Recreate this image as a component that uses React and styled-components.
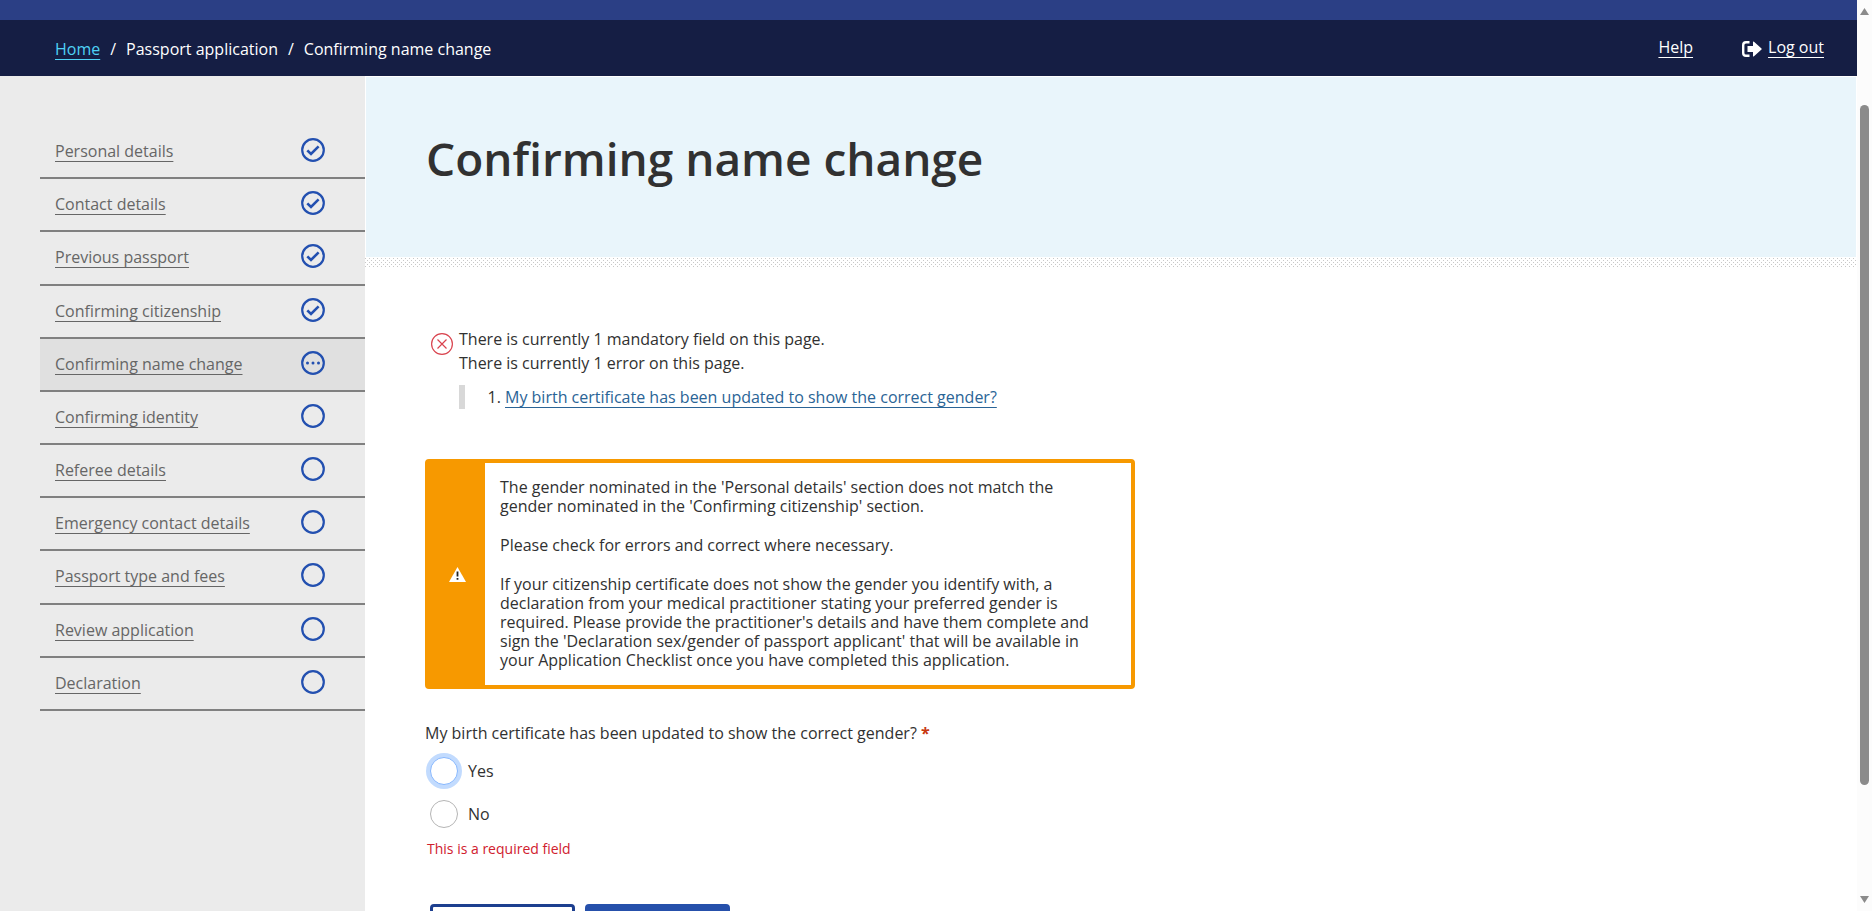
import React from "react";
import styled, { createGlobalStyle, css } from "styled-components";

const GlobalStyle = createGlobalStyle`
  * { box-sizing: border-box; }
  body {
    margin: 0;
    background: #fff;
    color: #313131;
    font-family: "Open Sans", sans-serif;
    font-size: 16px;
    line-height: 24px;
  }
`;

const Window = styled.div`
  display: grid;
  grid-template-columns: minmax(0, 1fr) 15px;
  height: 100vh;
  overflow: hidden;
`;

const Page = styled.div`
  display: flex;
  flex-direction: column;
  min-height: 0;
`;

const Banner = styled.header`
  flex: none;
  border-top: 20px solid #2b3f85;
  background: #151e44;
  color: #fff;
  height: 76px;
  padding: 0 33px 0 55px;
  display: flex;
  justify-content: space-between;
  font-weight: 500;
`;

const Breadcrumbs = styled.nav`
  display: flex;
  gap: 10px;
  padding-top: 17px;
`;

const TopLinks = styled.nav`
  display: flex;
  gap: 49px;
  padding-top: 15px;
`;

const underline = css`
  text-decoration: underline;
  text-underline-offset: 4px;
  text-decoration-thickness: 1px;
`;

const Link = styled.a`
  ${underline}
  color: ${(p) => p.$color || "#fff"};
`;

const LogOut = styled.span`
  display: flex;
  gap: 6px;
  svg { margin-top: 6px; }
`;

const Columns = styled.div`
  flex: 1;
  min-height: 0;
  display: grid;
  grid-template-columns: 365px minmax(0, 1fr);
`;

const Sidebar = styled.nav`
  background: #ebebeb;
  padding: 50px 0 0 40px;
`;

const Steps = styled.ol`
  list-style: none;
  margin: 0;
  padding: 0;
  height: 585px;
  display: grid;
  grid-auto-rows: 1fr;
`;

const Step = styled.li`
  display: flex;
  justify-content: space-between;
  align-items: flex-start;
  padding: 12px 40px 0 15px;
  border-bottom: 2px solid #808080;
  background: ${(p) => (p.$current ? "#e0e0e0" : "transparent")};
  a {
    ${underline}
    color: #666;
    line-height: 26px;
  }
`;

const Main = styled.main`
  min-width: 0;
  overflow: hidden;
`;

const Hero = styled.div`
  margin: 1px 1px 0;
  background: #e9f5fb;
  height: 180px;
  padding: 45px 60px 0;
`;

const Title = styled.h1`
  margin: 0;
  font-size: 46px;
  line-height: 72px;
  font-weight: 600;
`;

const DotBand = styled.svg`
  display: block;
  width: 100%;
  height: 10px;
`;

const Content = styled.form`
  padding: 60px 60px 0;
`;

const ErrorSummary = styled.section`
  display: flex;
  gap: 5px;
  padding-left: 5px;
  svg { flex: none; margin-top: 5px; }
  p { margin: 0; }
`;

const ErrorList = styled.ol`
  margin: 10px 0 0;
  padding-left: 40px;
  border-left: 6px solid #d8d8d8;
`;

const Warning = styled.section`
  margin-top: 50px;
  width: 710px;
  max-width: 100%;
  border: 4px solid #f79900;
  border-radius: 4px;
  background: #f79900;
  display: grid;
  grid-template-columns: 56px minmax(0, 1fr);
`;

const WarningIcon = styled.div`
  display: grid;
  place-items: center;
`;

const WarningText = styled.div`
  background: #fff;
  padding: 15px 30px 15px 15px;
  line-height: 19px;
  p { margin: 0 0 20px; }
  p:last-child { margin: 0; }
`;

const Question = styled.fieldset`
  border: 0;
  margin: 32px 0 0;
  padding: 0;
  legend { padding: 0; }
`;

const Required = styled.span`
  color: #c8380f;
  font-weight: 700;
`;

const Options = styled.div`
  display: flex;
  flex-direction: column;
  align-items: flex-start;
  gap: 15px;
  padding: 12px 0 0 5px;
`;

const Option = styled.label`
  display: flex;
  align-items: center;
  gap: 10px;
`;

const Radio = styled.input`
  appearance: none;
  flex: none;
  margin: 0;
  width: 28px;
  height: 28px;
  border-radius: 50%;
  background: #fff;
  border: 1px solid ${(p) => (p.$active ? "#86b7fe" : "#b5b5b5")};
  box-shadow: ${(p) => (p.$active ? "0 0 0 4px #c2dbfe" : "none")};
`;

const FieldError = styled.p`
  margin: 11px 0 0 2px;
  color: #d0202e;
  font-size: 14px;
  line-height: 20px;
`;

const Actions = styled.div`
  display: flex;
  gap: 10px;
  margin: 45px 0 0 5px;
`;

const Button = styled.button`
  width: 145px;
  height: 45px;
  border: 3px solid ${(p) => (p.$primary ? "#2650ab" : "#1d3f8f")};
  border-radius: 4px;
  background: ${(p) => (p.$primary ? "#2650ab" : "#fff")};
`;

const ScrollTrack = styled.div`
  background: #fcfcfc;
  display: flex;
  flex-direction: column;
  align-items: center;
  padding: 8px 0 8px;
`;

const ScrollArrow = styled.svg`
  flex: none;
`;

const ScrollThumb = styled.div`
  width: 9px;
  flex: 680;
  background: #8b8b8b;
  border-radius: 5px;
`;

const ScrollGap = styled.div`
  flex: ${(p) => p.$size};
`;

function StatusIcon({ status }) {
  return (
    <svg width="24" height="24" viewBox="0 0 24 24" fill="none" stroke="#2350b0" strokeWidth="2.2">
      <circle cx="12" cy="12" r="10.8" />
      {status === "done" && <path d="M6.3 12.3 10 16 17.6 8.4" strokeWidth="2.6" />}
      {status === "current" && (
        <g fill="#2350b0" stroke="none">
          <circle cx="6.5" cy="12" r="1.5" />
          <circle cx="12" cy="12" r="1.5" />
          <circle cx="17.5" cy="12" r="1.5" />
        </g>
      )}
    </svg>
  );
}

const steps = [
  ["Personal details", "done"],
  ["Contact details", "done"],
  ["Previous passport", "done"],
  ["Confirming citizenship", "done"],
  ["Confirming name change", "current"],
  ["Confirming identity", "todo"],
  ["Referee details", "todo"],
  ["Emergency contact details", "todo"],
  ["Passport type and fees", "todo"],
  ["Review application", "todo"],
  ["Declaration", "todo"],
];

export default function App() {
  return (
    <Window>
      <GlobalStyle />
      <Page>
        <Banner>
          <Breadcrumbs aria-label="Breadcrumb">
            <Link href="#home" $color="#4fd2f5">Home</Link>
            <span>/</span>
            <span>Passport application</span>
            <span>/</span>
            <span>Confirming name change</span>
          </Breadcrumbs>
          <TopLinks>
            <Link href="#help">Help</Link>
            <LogOut>
              <svg width="20" height="16" viewBox="0 0 20 16">
                <path d="M7.5 1.2H4Q1.2 1.2 1.2 4V12Q1.2 14.8 4 14.8H7.5" fill="none" stroke="#fff" strokeWidth="2.4" />
                <path d="M5.5 5H11V1Q11 0 12 .8L19.5 7.4Q20 8 19.5 8.6L12 15.2Q11 16 11 15V11H5.5Z" fill="#fff" />
              </svg>
              <Link href="#logout">Log out</Link>
            </LogOut>
          </TopLinks>
        </Banner>
        <Columns>
          <Sidebar aria-label="Application steps">
            <Steps>
              {steps.map(([name, status]) => (
                <Step key={name} $current={status === "current"}>
                  <a href="#step">{name}</a>
                  <StatusIcon status={status} />
                </Step>
              ))}
            </Steps>
          </Sidebar>
          <Main>
            <Hero>
              <Title>Confirming name change</Title>
            </Hero>
            <DotBand aria-hidden="true">
              <pattern id="dots" width="4" height="4" patternUnits="userSpaceOnUse">
                <rect x="0" y="1" width="1" height="1" fill="#c8c8c8" />
                <rect x="2" y="3" width="1" height="1" fill="#c8c8c8" />
              </pattern>
              <rect width="100%" height="10" fill="url(#dots)" />
            </DotBand>
            <Content>
              <ErrorSummary>
                <svg width="24" height="24" viewBox="0 0 24 24" fill="none" stroke="#d9434e" strokeWidth="1.2">
                  <circle cx="12" cy="12" r="10.4" />
                  <path d="M7.5 7.5l9 9M16.5 7.5l-9 9" />
                </svg>
                <div>
                  <p>There is currently 1 mandatory field on this page.</p>
                  <p>There is currently 1 error on this page.</p>
                  <ErrorList>
                    <li>
                      <Link href="#question" $color="#2a6496">
                        My birth certificate has been updated to show the correct gender?
                      </Link>
                    </li>
                  </ErrorList>
                </div>
              </ErrorSummary>
              <Warning>
                <WarningIcon>
                  <svg width="17" height="15" viewBox="0 0 17 15">
                    <path d="M8.5 0 17 15H0Z" fill="#fff" />
                    <path d="M7.6 4.5h1.8v5H7.6zM7.6 11h1.8v1.8H7.6z" fill="#222" />
                  </svg>
                </WarningIcon>
                <WarningText>
                  <p>
                    The gender nominated in the 'Personal details' section does not match the gender nominated in the
                    'Confirming citizenship' section.
                  </p>
                  <p>Please check for errors and correct where necessary.</p>
                  <p>
                    If your citizenship certificate does not show the gender you identify with, a declaration from your
                    medical practitioner stating your preferred gender is required. Please provide the practitioner's
                    details and have them complete and sign the 'Declaration sex/gender of passport applicant' that will
                    be available in your Application Checklist once you have completed this application.
                  </p>
                </WarningText>
              </Warning>
              <Question id="question">
                <legend>
                  My birth certificate has been updated to show the correct gender? <Required>*</Required>
                </legend>
                <Options>
                  <Option>
                    <Radio type="radio" name="gender-updated" value="yes" $active />
                    Yes
                  </Option>
                  <Option>
                    <Radio type="radio" name="gender-updated" value="no" />
                    No
                  </Option>
                </Options>
              </Question>
              <FieldError>This is a required field</FieldError>
              <Actions>
                <Button type="button" aria-label="Back" />
                <Button type="button" aria-label="Next" $primary />
              </Actions>
            </Content>
          </Main>
        </Columns>
      </Page>
      <ScrollTrack aria-hidden="true">
        <ScrollArrow width="9" height="7" viewBox="0 0 9 7"><path d="M4.5 0 9 7H0Z" fill="#8b8b8b" /></ScrollArrow>
        <ScrollGap $size={90} />
        <ScrollThumb />
        <ScrollGap $size={111} />
        <ScrollArrow width="9" height="7" viewBox="0 0 9 7"><path d="M0 0H9L4.5 7Z" fill="#8b8b8b" /></ScrollArrow>
      </ScrollTrack>
    </Window>
  );
}
